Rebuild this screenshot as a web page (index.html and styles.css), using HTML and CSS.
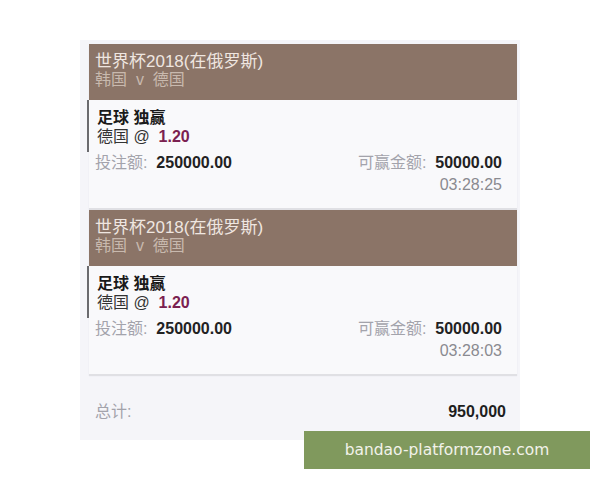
FILE: index.html
```html
<!DOCTYPE html>
<html lang="zh-CN">
<head>
    <meta charset="UTF-8">
    <title>注单</title>
    <link rel="stylesheet" href="styles.css">
</head>
<body>

    <div class="panel">
        <!-- bet 1 -->
        <div class="bet">
            <div class="bet-head">
                <div class="league">世界杯2018(在俄罗斯)</div>
                <div class="match">韩国 &nbsp;v &nbsp;德国</div>
            </div>
            <div class="bet-body">
                <div class="pick">
                    <div class="market">足球 独赢</div>
                    <div class="selection">德国 @ &nbsp;<span class="odds">1.20</span></div>
                </div>
                <div class="amounts">
                    <span><span class="label">投注额:</span> &nbsp;<b>250000.00</b></span>
                    <span><span class="label">可赢金额:</span> &nbsp;<b>50000.00</b></span>
                </div>
                <div class="time">03:28:25</div>
            </div>
        </div>

        <!-- bet 2 -->
        <div class="bet">
            <div class="bet-head">
                <div class="league">世界杯2018(在俄罗斯)</div>
                <div class="match">韩国 &nbsp;v &nbsp;德国</div>
            </div>
            <div class="bet-body">
                <div class="pick">
                    <div class="market">足球 独赢</div>
                    <div class="selection">德国 @ &nbsp;<span class="odds">1.20</span></div>
                </div>
                <div class="amounts">
                    <span><span class="label">投注额:</span> &nbsp;<b>250000.00</b></span>
                    <span><span class="label">可赢金额:</span> &nbsp;<b>50000.00</b></span>
                </div>
                <div class="time">03:28:03</div>
            </div>
        </div>

        <div class="total">
            <span class="label">总计:</span>
            <b>950,000</b>
        </div>
    </div>

    <div class="watermark">bandao-platformzone.com</div>

</body>
</html>
```

FILE: styles.css
```css
body {
    margin: 0;
    background: #ffffff;
    font-family: "Liberation Sans", "Noto Sans CJK SC", Arial, sans-serif;
    font-size: 16px;
    color: #222;
}
.panel {
    margin: 40px 0 0 80px;
    width: 428px;
    height: 396px;
    padding: 4px 3px 0 9px;
    background: #f5f5f9;
}
.bet {
    background: #f9f9fb;
    box-shadow: 0 2px 1px #e0e0e4;
    margin-bottom: 2px;
}
.bet-head {
    background: #8b7467;
    height: 56px;
    padding: 9px 0 0 6px;
    box-sizing: border-box;
    line-height: 18px;
}
.league {
    color: #efe6e0;
    font-size: 17px;
}
.match {
    color: #c8b9ae;
    font-size: 16px;
}
.bet-body {
    padding: 0 15px 0 0;
    height: 108px;
    box-sizing: border-box;
}
.pick {
    border-left: 2px solid #6a6a6e;
    margin-left: -2px;
    padding: 8px 0 0 8px;
    height: 52px;
    box-sizing: border-box;
    line-height: 19px;
}
.market {
    font-weight: bold;
    color: #1a1a1a;
}
.selection {
    color: #333;
}
.odds {
    color: #7b2150;
    font-weight: bold;
}
.amounts {
    display: flex;
    justify-content: space-between;
    padding-left: 6px;
    line-height: 21px;
}
.amounts b {
    color: #222;
}
.label {
    color: #a3a3ab;
}
.time {
    text-align: right;
    color: #8a8a90;
    line-height: 24px;
}
.total {
    display: flex;
    justify-content: space-between;
    padding: 26px 11px 0 6px;
    line-height: 20px;
}
.total b {
    color: #1e1e1e;
}
.watermark {
    position: absolute;
    left: 304px;
    top: 431px;
    width: 286px;
    height: 38px;
    line-height: 38px;
    text-align: center;
    background: #80995d;
    color: #f2f2ea;
    font-family: "DejaVu Sans", sans-serif;
    font-size: 15.5px;
}
```
